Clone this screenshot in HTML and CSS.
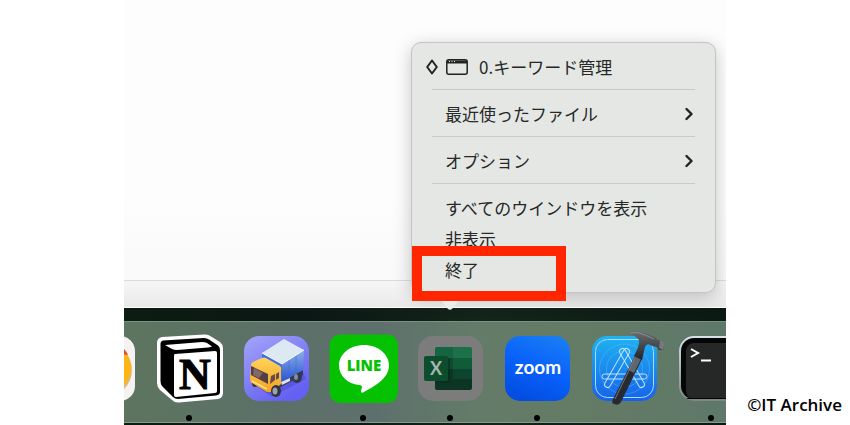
FILE: index.html
```html
<!DOCTYPE html>
<html lang="ja">
<head>
<meta charset="utf-8">
<title>Dock</title>
<link rel="stylesheet" href="styles.css">
</head>
<body>
<main class="desktop">
  <div class="window">
    <div class="window-body"></div>
    <div class="window-footer"></div>
  </div>

  <div class="wallpaper">
    <nav class="dock" aria-label="Dock">
      <button class="app" aria-label="Chat">
        <svg viewBox="0 0 87 100">
          <rect x="11" y="14" width="65" height="65" rx="15" fill="#f4f3f1"/>
          <circle cx="46" cy="48" r="27" fill="#d9b98b"/>
          <circle cx="45" cy="46" r="27" fill="#fdb515"/>
          <path d="M50 20Q64 22 69 33L60 32Z" fill="#e8452c"/>
        </svg>
      </button>
      <button class="app" aria-label="Notion">
        <svg viewBox="0 0 87 100">
          <path d="M16 15L58 12.500Q62 12 65 14.500L74 20Q77 22.500 77 26V71Q77 76 72 77L33 80.500Q29 81 26 78L14 68Q11 65 11 61V21Q11 16 16 15Z" fill="#fff"/>
          <path d="M17 18.500L58 16Q61 16 63 17.500L72 23.500Q74 25 74 28V70Q74 73 70 73.500L32 77Q29 77 27 75L16 64Q14.500 62 14.500 59V22Q14.500 19 17 18.500Z" fill="#000"/>
          <path d="M19 23L56 20Q59 20 61 21L66 24.500Q65 25 62 25.500L31 28Q28 28 26 27L19 23Z" fill="#fff"/>
          <path d="M29 32L69 29Q71 29 71 31V69Q71 71 69 71L30 75Q28 75 28 73V34Q28 32 29 32Z" fill="#fff"/>
          <text class="logo-notion" x="49" y="67">N</text>
          <circle cx="43" cy="96" r="3"/>
        </svg>
      </button>
      <button class="app" aria-label="Transmit">
        <svg viewBox="0 0 87 100">
          <defs>
            <linearGradient id="truck-bg" x1="0" y1="0" x2=".6" y2="1"><stop offset="0" stop-color="#a4a4fb"/><stop offset=".5" stop-color="#8483f4"/><stop offset="1" stop-color="#6460f2"/></linearGradient>
            <linearGradient id="truck-side" x1="0" y1="0" x2="0" y2="1"><stop offset="0" stop-color="#8eb1ea"/><stop offset="1" stop-color="#2852d0"/></linearGradient>
            <linearGradient id="truck-cab" x1="0" y1="0" x2="0" y2="1"><stop offset="0" stop-color="#ffd45c"/><stop offset="1" stop-color="#f5a11f"/></linearGradient>
          </defs>
          <rect x="11" y="14" width="65" height="65" rx="15" fill="url(#truck-bg)"/>
          <path d="M19 61L39 75L73 57L69 48L47 57Z" fill="#4f4bd2" opacity=".6"/>
          <path d="M42 63L70 48L70 53L46 66Z" fill="#343b61"/>
          <ellipse cx="64" cy="55" rx="5" ry="6" fill="#33384a"/><ellipse cx="63" cy="55" rx="2" ry="3" fill="#858ca0"/>
          <path d="M29 31L49 42V60L29 47Z" fill="#3d6de6"/>
          <path d="M49 42L71 28L70 48L49 60Z" fill="url(#truck-side)"/>
          <path d="M56 38V56M63 33V52" stroke="#3b64d0" stroke-width=".5"/>
          <path d="M29 31L51 17L71 28L49 42Z" fill="#dce8f2"/>
          <path d="M29 31L49 42L71 28" fill="none" stroke="#f3f9ff"/>
          <path d="M48 60L57 56V59L49 63Z" fill="#dce1ec"/>
          <ellipse cx="22" cy="61" rx="3" ry="4" fill="#33313b"/>
          <path d="M18 43Q18 41 20 40L29 36Q31 35 33 36L47 44Q49 46 48 48V62L39 70L34 70L19 61Q17 60 17 57Z" fill="url(#truck-cab)"/>
          <path d="M18 44L35 52V62L18 53Z" fill="#514044"/>
          <path d="M21 46L30 51L26 56L20 53Z" fill="#84676a"/>
          <path d="M38 54L42 52V58L37 62ZM43 52L46 50V56L43 58Z" fill="#68484b"/>
          <path d="M19 59L34 67" fill="none" stroke="#ffe08a" stroke-width="1.500"/>
          <ellipse cx="43" cy="69" rx="5" ry="6" fill="#31333f"/><ellipse cx="42" cy="69" rx="2.500" ry="3.500" fill="#9ca1ad"/>
        </svg>
      </button>
      <button class="app" aria-label="LINE">
        <svg viewBox="0 0 87 100">
          <rect x="9.500" y="12.500" width="68.500" height="68.500" rx="11" fill="#05c102"/>
          <path d="M44 23C30 23 19 32 19 43.500C19 54 28 62 39 63Q42 63 42 65L41 69Q41 72 44 70C53 65 69 57 69 43.500C69 32 58 23 44 23Z" fill="#fff"/>
          <text class="logo-line" x="44" y="49">LINE</text>
          <circle cx="43" cy="96" r="3"/>
        </svg>
      </button>
      <button class="app" aria-label="Excel">
        <svg viewBox="0 0 87 100">
          <rect x="11" y="14" width="65" height="65" rx="15" fill="#7c7c7d"/>
          <path d="M30 25H46V36H28V27Q28 25 30 25Z" fill="#156442"/>
          <path d="M46 25H63Q65 25 65 27V36H46Z" fill="#1c7149"/>
          <path d="M28 36H46V47H28Z" fill="#0e4a2f"/><path d="M46 36H65V47H46Z" fill="#105b38"/>
          <path d="M28 47H46V57H28Z" fill="#0c3725"/><path d="M46 47H65V57H46Z" fill="#0d442d"/>
          <path d="M28 57H65V66Q65 68 63 68H30Q28 68 28 66Z" fill="#0c3524"/>
          <path d="M28 36H43V61H28Z" fill="#072b1b" opacity=".55"/>
          <rect x="17" y="34" width="24" height="25" rx="2" fill="#0c4d2e"/>
          <text class="logo-excel" x="29" y="53">X</text>
          <circle cx="43" cy="96" r="3"/>
        </svg>
      </button>
      <button class="app" aria-label="zoom">
        <svg viewBox="0 0 87 100">
          <defs><linearGradient id="zoom-bg" x1=".7" y1="0" x2=".3" y2="1"><stop offset="0" stop-color="#187cf4"/><stop offset=".5" stop-color="#0860fb"/><stop offset="1" stop-color="#034de0"/></linearGradient></defs>
          <rect x="11" y="14" width="65" height="65" rx="15" fill="url(#zoom-bg)"/>
          <text class="logo-zoom" x="44" y="52">zoom</text>
          <circle cx="43" cy="96" r="3"/>
        </svg>
      </button>
      <button class="app" aria-label="Xcode">
        <svg viewBox="0 0 87 100">
          <defs>
            <linearGradient id="xcode-bg" x1="0" y1="0" x2="0" y2="1"><stop offset="0" stop-color="#1eb3f3"/><stop offset="1" stop-color="#1762e8"/></linearGradient>
            <linearGradient id="hammer-head" x1="0" y1="0" x2="0" y2="1"><stop offset="0" stop-color="#6a6e71"/><stop offset="1" stop-color="#202428"/></linearGradient>
          </defs>
          <rect x="11" y="14" width="65" height="65" rx="15" fill="url(#xcode-bg)"/>
          <rect x="14.500" y="17.500" width="58" height="58" rx="12" fill="none" stroke="#a8dcfb"/>
          <circle cx="43.500" cy="47" r="25" fill="none" stroke="#6bc0f5" stroke-width=".4"/>
          <circle cx="43.500" cy="47" r="18" fill="none" stroke="#6bc0f5" stroke-width=".4"/>
          <g fill="none" stroke="#c0e3fd" stroke-width="1">
            <rect x="21" y="52" width="45" height="5" rx="2.500"/>
            <rect x="-3" y="-22" width="6" height="44" rx="3" transform="translate(36 46) rotate(30)"/>
            <rect x="-3" y="-22" width="6" height="44" rx="3" transform="translate(51 46) rotate(-30)"/>
          </g>
          <path d="M54 34L61 37L40 80Q38 84 33 82Q30 81 32 77Z" fill="#272a30"/>
          <path d="M54 34L60 37L53 51L47 48Z" fill="#61666a"/>
          <path d="M54 36L34 77" stroke="#74787c" stroke-width="1"/>
          <path d="M47 11Q54 7 64 11L74 15Q76 19 79 18L84 20L82 28L78 28L76 25L71 24Q66 20 64 25L61 38L53 34Q59 23 58 18Q55 14 47 11Z" fill="url(#hammer-head)"/>
          <path d="M49 11Q57 9 64 13L73 17" fill="none" stroke="#92979a" stroke-width=".8"/>
          <path d="M79 18L84 20L82 28L78 26Z" fill="#727a7e"/>
        </svg>
      </button>
      <button class="app" aria-label="Terminal">
        <svg viewBox="0 0 87 100">
          <defs><linearGradient id="term-rim" x1="0" y1="0" x2="0" y2="1"><stop offset="0" stop-color="#d6e4e8"/><stop offset="1" stop-color="#7e8584"/></linearGradient></defs>
          <rect x="11" y="14" width="65" height="65" rx="15" fill="url(#term-rim)"/>
          <rect x="13" y="16" width="61" height="61" rx="13" fill="#050606"/>
          <rect x="18" y="21" width="51" height="56" rx="8" fill="#262727"/>
          <path d="M18 76H74L69 77H20Z" fill="#050606"/>
          <path d="M23 27L30 31L23 35M33 38.500H43" fill="none" stroke="#fff" stroke-width="2"/>
          <circle cx="43" cy="96" r="3"/>
        </svg>
      </button>
    </nav>
  </div>

  <div class="menu">
    <ul class="menu-list">
      <li>
        <button class="menu-item menu-item-window">
          <svg class="diamond" viewBox="0 0 12 16"><path d="M6 1.500L10.800 8L6 14.500L1.200 8Z" fill="none" stroke="#222" stroke-width="2" stroke-linejoin="round"/></svg>
          <svg class="window-icon" viewBox="0 0 22 16"><rect x=".8" y=".8" width="20.400" height="14.400" rx="2" fill="none" stroke="#222" stroke-width="1.500"/><path d="M1 1.500H21V4.500H1Z" fill="#222"/><path d="M3 2.500H4M5.500 2.500H6.500M8 2.500H9" stroke="#e5e7e4"/></svg>
          <span>0.キーワード管理</span>
        </button>
      </li>
      <li class="separator" role="separator"></li>
      <li>
        <button class="menu-item">最近使ったファイル
          <svg class="chevron" viewBox="0 0 8 14"><path d="M1.500 2L6.500 7L1.500 12" fill="none" stroke="#222" stroke-width="2.400" stroke-linecap="round" stroke-linejoin="round"/></svg>
        </button>
      </li>
      <li class="separator" role="separator"></li>
      <li>
        <button class="menu-item">オプション
          <svg class="chevron" viewBox="0 0 8 14"><path d="M1.500 2L6.500 7L1.500 12" fill="none" stroke="#222" stroke-width="2.400" stroke-linecap="round" stroke-linejoin="round"/></svg>
        </button>
      </li>
      <li class="separator" role="separator"></li>
      <li><button class="menu-item">すべてのウインドウを表示</button></li>
      <li><button class="menu-item">非表示</button></li>
      <li><button class="menu-item">終了</button></li>
    </ul>
    <svg class="menu-arrow" viewBox="0 0 32 18"><path d="M0 0H32L18 17Q16 18.500 14 17Z" fill="#ececec"/></svg>
    <div class="highlight"></div>
  </div>
</main>
<footer class="credit">©IT Archive</footer>
</body>
</html>
```

FILE: styles.css
```css
* {
  box-sizing: border-box;
}

body {
  margin: 0;
  min-height: 100vh;
  display: grid;
  grid-template-columns: 124px 1fr 124px;
  background: #fff;
  color: #262727;
  font-family: "Noto Sans CJK JP", sans-serif;
}

button {
  margin: 0;
  padding: 0;
  border: 0;
  background: none;
  color: inherit;
  font: inherit;
}

svg {
  display: block;
  flex: none;
}

.desktop {
  grid-column: 2;
  position: relative;
  display: flex;
  flex-direction: column;
  overflow: hidden;
}

.window {
  flex: 1;
  display: flex;
  flex-direction: column;
  border-bottom: 1px solid #fff;
}

.window-body {
  flex: 1;
  background: linear-gradient(#fdfdfd 70%, #f9f9f9);
}

.window-footer {
  height: 27px;
  border-top: 1px solid #dcdcdc;
  background: linear-gradient(#f6f6f6, #e9e9e9);
}

.wallpaper {
  padding: 13px 0 2px;
  background: linear-gradient(90deg, #0c1c11, #0b1714 30%, #13251a 60%, #0b1913);
}

.dock {
  display: flex;
  border-top: 1px solid #7c8f83;
  border-bottom: 1px solid #879a8b;
  background: linear-gradient(90deg, #5d755f, #5c7068 25%, #5e706d 42%, #637b68 58%, #647b65 75%, #5e7869);
}

.app {
  flex: none;
  width: 87px;
  height: 100px;
}

.app:first-child {
  margin-left: -65px;
}

.logo-notion,
.logo-line,
.logo-excel,
.logo-zoom {
  text-anchor: middle;
  font-weight: 700;
}

.logo-notion {
  font-family: "Liberation Serif", serif;
  font-size: 44px;
  stroke: #000;
  stroke-width: 1px;
}

.logo-line {
  fill: #05c102;
  font-family: "Open Sans", sans-serif;
  font-size: 15px;
  font-weight: 800;
}

.logo-excel {
  fill: #a6b5ac;
  font-family: Lato, sans-serif;
  font-size: 18px;
}

.logo-zoom {
  fill: #fff;
  font-family: Lato, sans-serif;
  font-size: 19px;
}

.menu {
  position: absolute;
  left: 287px;
  bottom: 132px;
  width: 305px;
  padding: 8px 0 7px;
  border: 1px solid #c3c4c3;
  border-radius: 10px;
  background: #e5e7e4;
  box-shadow: 0 4px 18px rgb(0 0 0 / 22%);
  font-size: 17px;
}

.menu-list {
  margin: 0;
  padding: 0;
  list-style: none;
}

.menu-item {
  display: flex;
  align-items: center;
  width: 100%;
  height: 31px;
  padding: 0 22px 0 33px;
  text-align: left;
  line-height: 31px;
}

.menu-item-window {
  padding-left: 14px;
}

.diamond {
  width: 12px;
  height: 16px;
  margin-right: 8px;
}

.window-icon {
  width: 22px;
  height: 16px;
  margin-right: 11px;
}

.chevron {
  width: 8px;
  height: 14px;
  margin-left: auto;
}

.separator {
  height: 1px;
  margin: 7px 20px 8px;
  background: #c9cbc9;
}

.menu-arrow {
  position: absolute;
  top: 100%;
  left: 22px;
  width: 32px;
  height: 18px;
}

.highlight {
  position: absolute;
  left: 0;
  bottom: -9px;
  width: 154px;
  height: 55px;
  border: 10px solid #ff2600;
}

.credit {
  grid-column: 3;
  align-self: end;
  padding: 0 8px 8px 0;
  color: #000;
  font-family: "Open Sans", sans-serif;
  font-size: 17px;
  font-weight: 600;
  line-height: 24px;
  text-align: right;
}
```
